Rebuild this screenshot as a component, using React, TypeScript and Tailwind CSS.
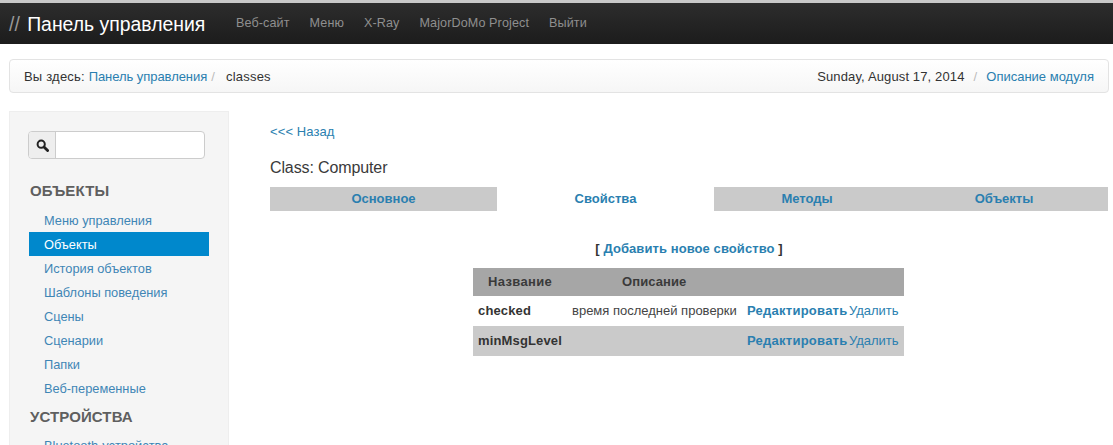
import React from 'react';

const NAV = ['Веб-сайт', 'Меню', 'X-Ray', 'MajorDoMo Project', 'Выйти'];
const MENU_OBJECTS = ['Меню управления', 'Объекты', 'История объектов', 'Шаблоны поведения', 'Сцены', 'Сценарии', 'Папки', 'Веб-переменные'];
const TABS = [
    { label: 'Основное', width: 'w-[227px]', active: false },
    { label: 'Свойства', width: 'w-[217px]', active: true },
    { label: 'Методы', width: 'w-[186px]', active: false },
    { label: 'Объекты', width: 'w-[208px]', active: false },
];
const ROWS = [
    { name: 'checked', description: 'время последней проверки', shaded: false },
    { name: 'minMsgLevel', description: '', shaded: true },
];

const LINK = 'text-[#2a7fb0]';

export default function App() {
    return (
        <div className="h-[445px] w-[1113px] overflow-hidden bg-white font-['Liberation_Sans',Arial,sans-serif] text-[13px] text-[#333333]">
            {/* Navbar */}
            <header className="flex h-[44px] items-center border-t-[3px] border-[#c9c9c9] bg-gradient-to-b from-[#2d2d2d] to-[#1c1c1c] pl-[9px]">
                <div className="w-[227px] text-[19.4px] leading-[26px] text-white">
                    <span className="mr-[2px] text-[#999999]">//</span> Панель управления
                </div>
                <nav className="flex gap-[20px] text-[12.6px] tracking-[0.1px] text-[#8f8f8f]">
                    {NAV.map(item => (
                        <span key={item}>{item}</span>
                    ))}
                </nav>
            </header>

            {/* Breadcrumb */}
            <div className="ml-[9px] mr-[4px] mt-[15px] flex h-[34px] items-center justify-between rounded-[4px] border border-[#e3e3e3] bg-gradient-to-b from-white to-[#f6f6f6] px-[14px] pt-[1px]">
                <div className="tracking-[0.2px]">
                    Вы здесь: <span className={`tracking-[-0.05px] ${LINK}`}>Панель управления</span>
                    <span className="ml-[4px] mr-[11px] text-[#bbbbbb]">/</span>
                    classes
                </div>
                <div className="tracking-[0.13px]">
                    Sunday, August 17, 2014
                    <span className="mx-[9px] text-[#bbbbbb]">/</span>
                    <span className={`tracking-normal ${LINK}`}>Описание модуля</span>
                </div>
            </div>

            <div className="mt-[18px] flex items-start">
                {/* Sidebar */}
                <aside className="ml-[9px] h-[340px] w-[220px] shrink-0 border border-b-0 border-[#eeeeee] bg-[#f5f5f5] pl-[18px] pt-[19px]">
                    <div className="flex h-[28px] w-[177px] overflow-hidden rounded-[4px] border border-[#cccccc] bg-white">
                        <div className="flex w-[27px] items-center justify-center border-r border-[#cccccc] bg-[#eeeeee]">
                            <svg width="13" height="13" viewBox="0 0 13 13" fill="none" stroke="#222222">
                                <circle cx="5.2" cy="5.2" r="3.6" strokeWidth="2" />
                                <path d="M8 8l3.6 3.6" strokeWidth="2.8" strokeLinecap="round" />
                            </svg>
                        </div>
                    </div>
                    <div className="ml-[2px] mt-[17px] text-[15px] font-bold leading-[30px] tracking-[0.15px] text-[#5f5f5f]">ОБЪЕКТЫ</div>
                    <ul className="ml-[1px] mt-[2px] w-[180px] text-[12.8px]">
                        {MENU_OBJECTS.map(item => (
                            <li
                                key={item}
                                className={`h-[24px] pl-[15px] leading-[26px] ${item === 'Объекты' ? 'bg-[#0088cc] text-white' : 'text-[#3f86b5]'}`}
                            >
                                {item}
                            </li>
                        ))}
                    </ul>
                    <div className="ml-[2px] mt-[2px] text-[15px] font-bold leading-[30px] tracking-[0.1px] text-[#5f5f5f]">УСТРОЙСТВА</div>
                    <div className="ml-[1px] mt-[2px] pl-[15px] text-[12.8px] leading-[24px] text-[#3f86b5]">Bluetooth-устройства</div>
                </aside>

                {/* Content */}
                <main className="ml-[41px] w-[838px] pt-[12px]">
                    <div className={`leading-[18px] tracking-[0.1px] ${LINK}`}>&lt;&lt;&lt; Назад</div>
                    <div className="mt-[17px] text-[16px] leading-[20px] tracking-[-0.12px] text-[#3a3a3a]">Class: Computer</div>
                    <div className="mt-[9px] flex">
                        {TABS.map(tab => (
                            <div
                                key={tab.label}
                                className={`h-[24px] text-center font-bold leading-[24px] ${LINK} ${tab.width} ${tab.active ? 'bg-white' : 'bg-[#cacaca]'}`}
                            >
                                {tab.label}
                            </div>
                        ))}
                    </div>

                    <div className="mt-[28px] text-center font-bold leading-[20px] tracking-[0.08px]">
                        [ <span className={LINK}>Добавить новое свойство</span> ]
                    </div>

                    <table className="ml-[203px] mt-[9px] w-[431px] table-fixed border-collapse">
                        <colgroup>
                            <col className="w-[99px]" />
                            <col className="w-[175px]" />
                            <col className="w-[102px]" />
                            <col />
                        </colgroup>
                        <thead>
                            <tr className="h-[28px] bg-[#a6a6a6] font-bold text-[#3a3a3a]">
                                <th className="pl-[15px] text-left tracking-[0.35px]">Название</th>
                                <th className="pl-[50px] text-left tracking-[0.1px]">Описание</th>
                                <th />
                                <th />
                            </tr>
                        </thead>
                        <tbody>
                            {ROWS.map(row => (
                                <tr key={row.name} className={`h-[30px] ${row.shaded ? 'bg-[#cacaca]' : 'bg-white'}`}>
                                    <td className="pl-[5px] font-bold tracking-[0.15px]">{row.name}</td>
                                    <td className="whitespace-nowrap text-[#444444]">{row.description}</td>
                                    <td className={`whitespace-nowrap font-bold tracking-[0.25px] ${LINK}`}>Редактировать</td>
                                    <td className={`tracking-[-0.03px] ${LINK}`}>Удалить</td>
                                </tr>
                            ))}
                        </tbody>
                    </table>
                </main>
            </div>
        </div>
    );
}
